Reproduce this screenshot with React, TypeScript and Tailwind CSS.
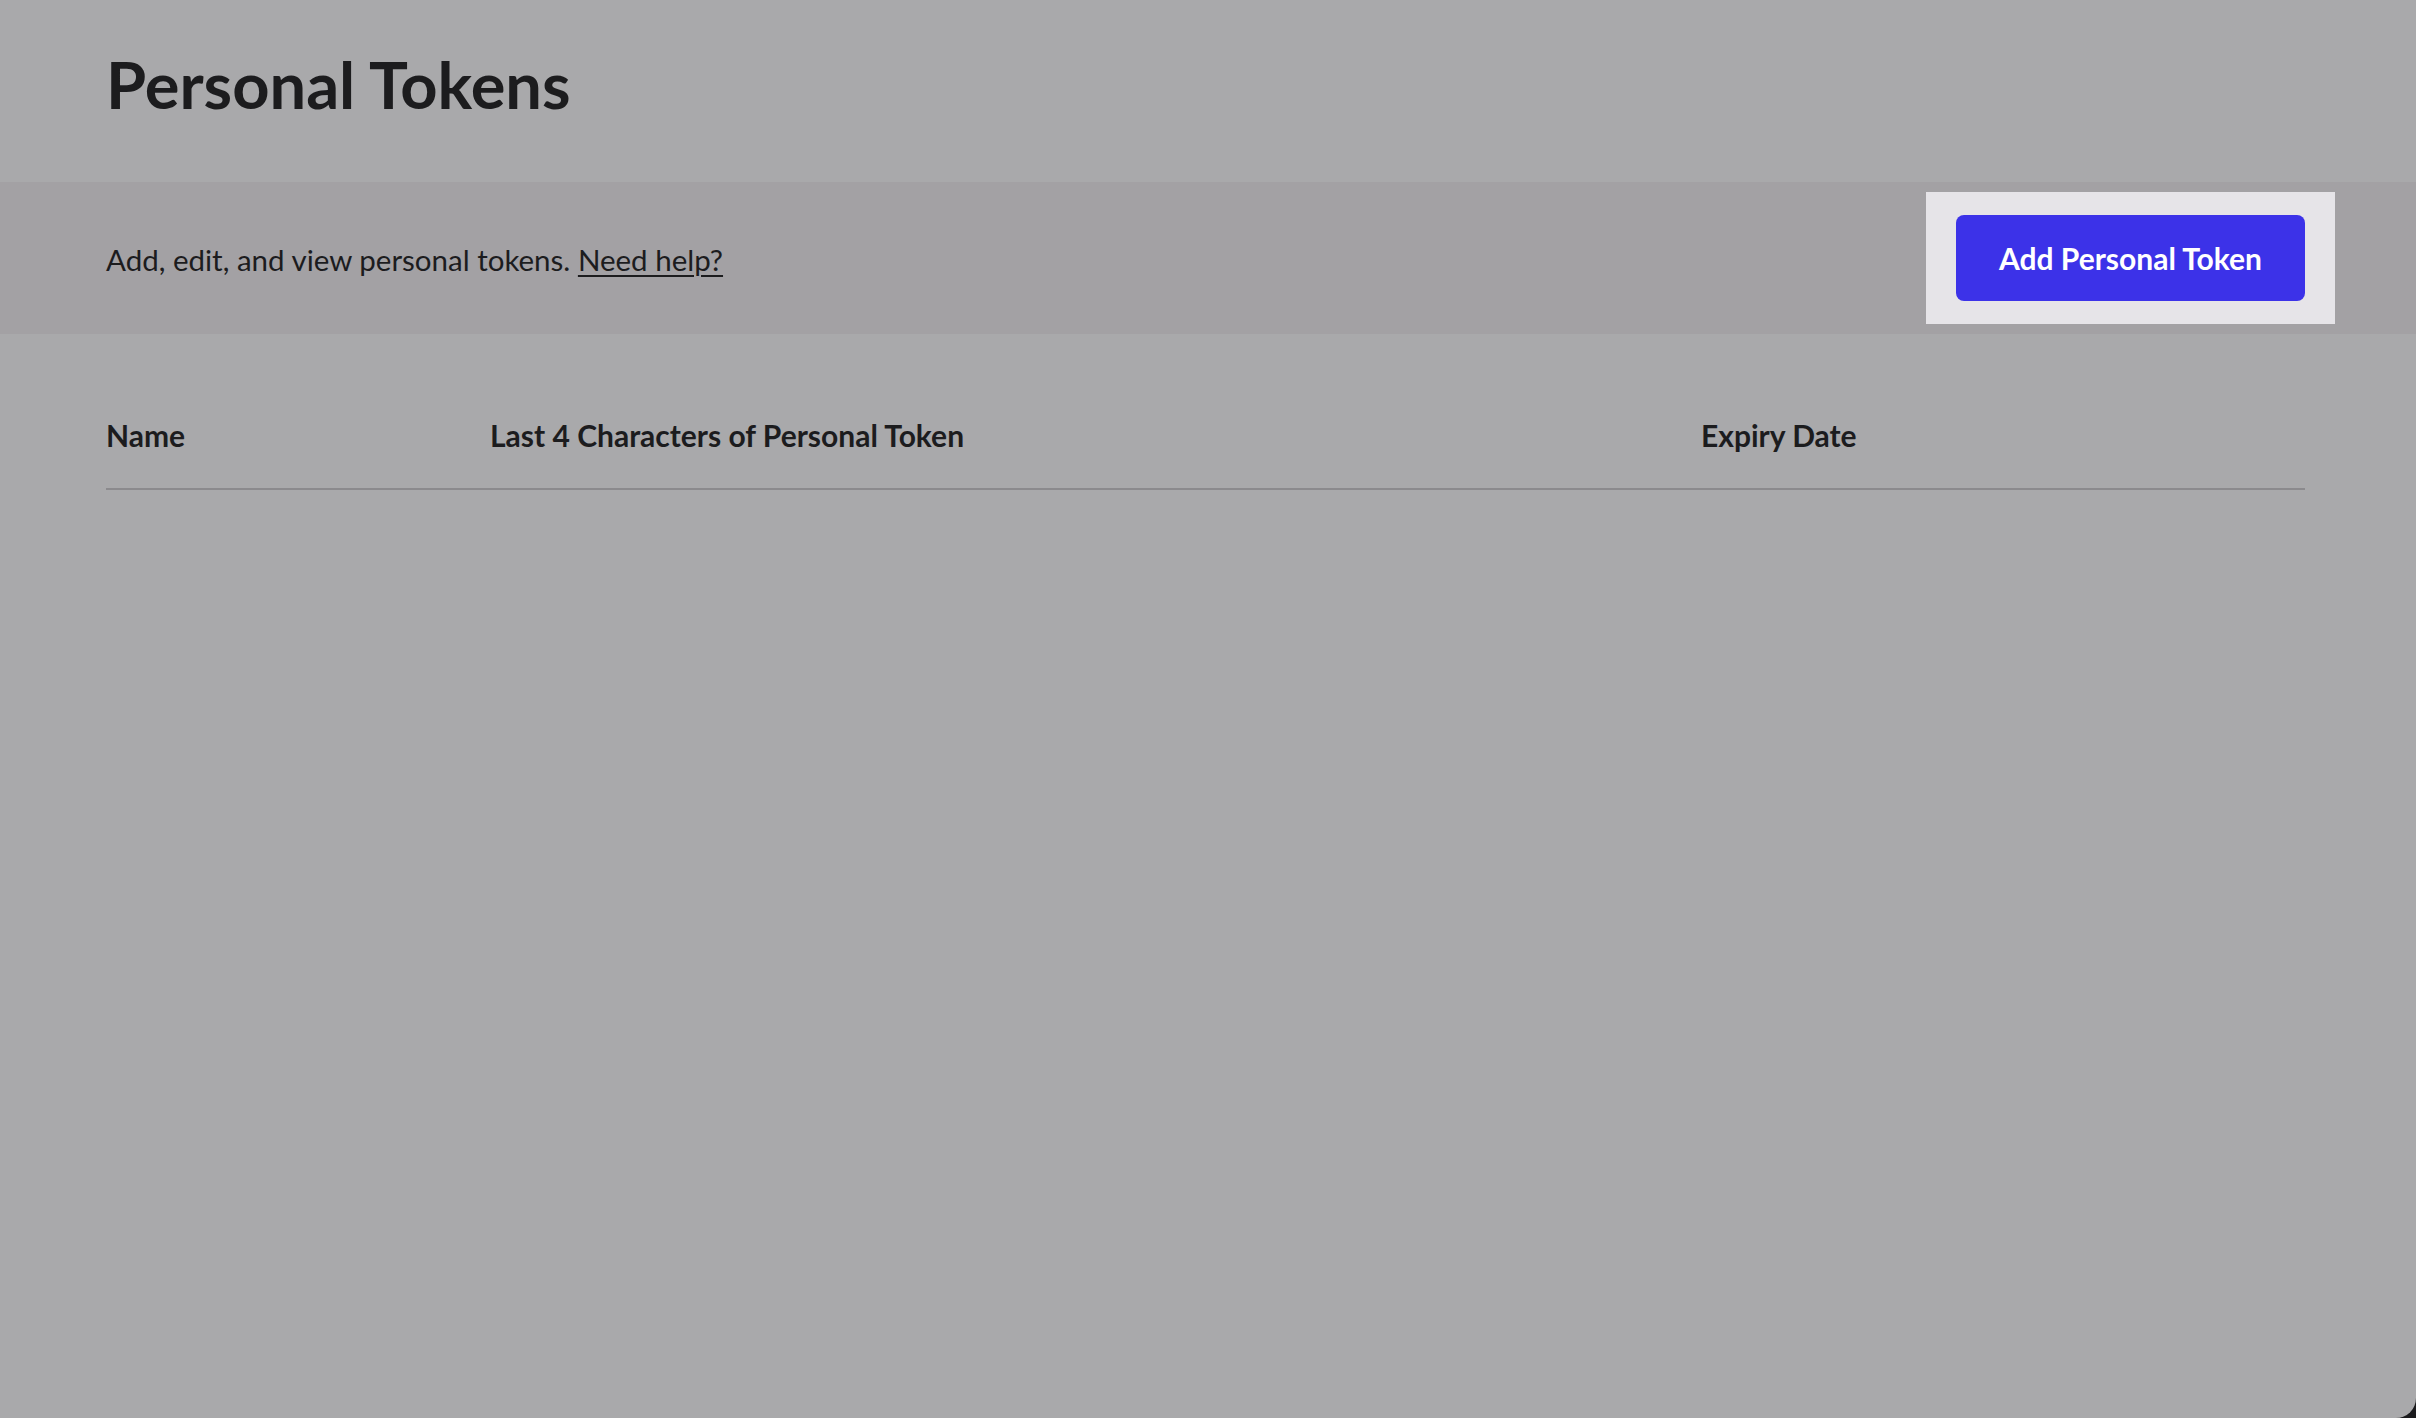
import { FC } from 'react'

const columns = ['Name', 'Last 4 Characters of Personal Token', 'Expiry Date']

const App: FC = () => {
  return (
    <div className="w-full h-[1418px] bg-[#1b1b1d] font-['Lato','Liberation_Sans',sans-serif] text-[#1c1c1e]">
      <div className="h-full flex flex-col bg-[#a9a9ab] rounded-br-[20px] overflow-hidden">
        {/* page title */}
        <div className="h-[182px] px-[106px] pt-[52px]">
          <h1 className="text-[65px] leading-none font-bold">Personal Tokens</h1>
        </div>

        {/* toolbar */}
        <div className="h-[152px] bg-[#a3a1a4] flex items-center justify-between pl-[106px] pr-[81px]">
          <p className="text-[29.5px] leading-[36px] pt-[3px]">
            Add, edit, and view personal tokens.{' '}
            <a href="#" className="underline underline-offset-[4px] decoration-2">
              Need help?
            </a>
          </p>
          <div className="bg-[#e6e4e8] pl-[30px] pr-[30px] py-[23px]">
            <button
              type="button"
              className="w-[349px] h-[86px] rounded-[8px] bg-[#3c32e8] text-white text-[30px] leading-[36px] font-bold flex items-center justify-center"
            >
              Add Personal Token
            </button>
          </div>
        </div>

        {/* table */}
        <div className="pl-[106px] pr-[111px] pt-[83px]">
          <div className="grid grid-cols-[384px_1211px_1fr] border-b-2 border-[#8b8a8d] pb-[35px]">
            {columns.map(col => (
              <div key={col} className="text-[30px] leading-[36px] font-bold">
                {col}
              </div>
            ))}
          </div>
        </div>
      </div>
    </div>
  )
}

export default App
